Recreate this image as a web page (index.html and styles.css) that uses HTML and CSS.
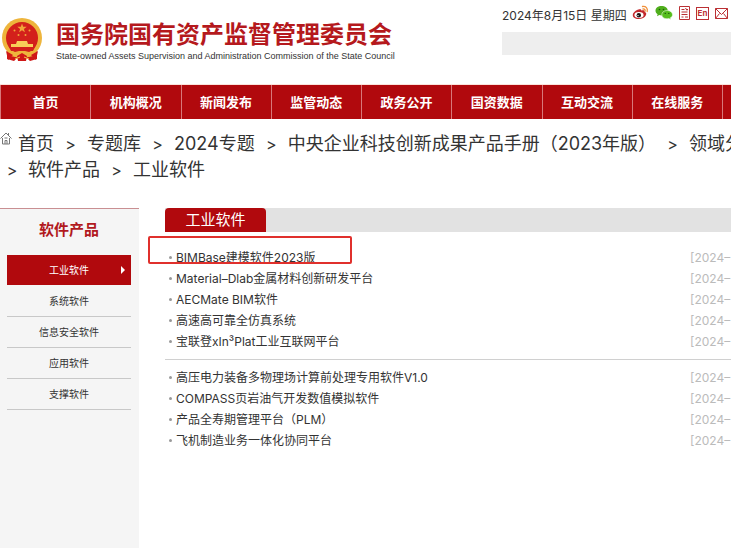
FILE: index.html
```html
<!DOCTYPE html>
<html lang="zh-CN">
<head>
    <meta charset="UTF-8">
    <meta name="viewport" content="width=device-width, initial-scale=1.0">
    <title>工业软件 - 国务院国有资产监督管理委员会</title>
    <link rel="stylesheet" href="styles.css">
</head>
<body>
    <header class="header">
        <svg class="emblem" viewBox="0 0 42 44" aria-hidden="true">
            <path d="M6 31 L6 41 L13 43 L16 40 L21 43 L26 40 L29 43 L36 41 L36 31 Z" fill="#cf1717"/>
            <circle cx="21" cy="20" r="20" fill="#eeb53c"/>
            <circle cx="21" cy="20" r="16" fill="#d3201b"/>
            <path d="M21 5.500l1.200 3.300h3.500l-2.800 2.100 1 3.400-2.900-2-2.900 2 1-3.400-2.800-2.100h3.500z" fill="#f0a53a"/>
            <g fill="#f0a53a">
                <circle cx="13.500" cy="12.500" r="1"/>
                <circle cx="28.500" cy="12.500" r="1"/>
                <circle cx="17.500" cy="17" r="1"/>
                <circle cx="24.500" cy="17" r="1"/>
            </g>
            <path d="M16 23h10l1 3h5v3H10v-3h5z" fill="#f8cf58"/>
            <path d="M8 29h26l-2 4H10z" fill="#d3201b"/>
            <path d="M6 32l8 2 4-1h6l4 1 8-2-3 6-6 1-6-3-6 3-6-1z" fill="#eeb53c"/>
            <path d="M5 33l7 4-5 5zM37 33l-7 4 5 5zM16 38l5-3 5 3-1 5h-8z" fill="#cf1717"/>
            <path d="M14 41l5-2M28 41l-5-2" stroke="#f6c242" fill="none"/>
        </svg>
        <div class="brand">
            <h1>国务院国有资产监督管理委员会</h1>
            <p>State-owned Assets Supervision and Administration Commission of the State Council</p>
        </div>
        <div class="tools">
            <div class="tools-row">
                <span class="date">2024年8月15日 星期四</span>
                <a href="#" aria-label="微博">
                    <svg width="17" height="16" viewBox="0 0 17 16">
                        <path d="M6.500 4.500c1.500-.7 3-.4 2.800 1.100 2-.8 3.900-.3 3.400 1.500 1.500.5 1.900 1.400 1.300 2.900-.9 2.500-4.100 4-7.500 4C3 14 .5 12.200.8 9.700 1.100 7.500 4 5.200 6.500 4.500z" fill="#c3272b"/>
                        <ellipse cx="7" cy="10" rx="4.600" ry="3" fill="#fff"/>
                        <circle cx="6.800" cy="10.200" r="2.200" fill="#1c1414"/>
                        <circle cx="6" cy="10.600" r=".7" fill="#fff"/>
                        <path d="M10.500 1.500c3.500-.5 5.500 2 4.700 5M11 4c1.600-.2 2.400.8 2.100 2.200" fill="none" stroke="#f0903a" stroke-width="1.300" stroke-linecap="round"/>
                    </svg>
                </a>
                <a href="#" aria-label="微信">
                    <svg width="18" height="16" viewBox="0 0 18 16">
                        <path d="M6.500 1C3 1 .5 3.100.5 5.700c0 1.500.8 2.700 2.100 3.600L2 11.300l2.300-1.200c.8.2 1.600.3 2.500.3 3.500 0 6-2.100 6-4.700S10 1 6.500 1z" fill="#4fae1c"/>
                        <path d="M12 5.500c-3 0-5.200 1.800-5.200 4.200s2.200 4.100 5.200 4.100c.7 0 1.300-.1 1.900-.3l2 1.100-.5-1.800c1.300-.7 2.100-1.800 2.100-3.100 0-2.400-2.500-4.200-5.500-4.200z" fill="#56bd1d" stroke="#fff" stroke-width=".5"/>
                        <g fill="#1d5c0c"><circle cx="4.500" cy="4.500" r=".8"/><circle cx="8.500" cy="4.500" r=".8"/><circle cx="10.300" cy="8.400" r=".7"/><circle cx="13.800" cy="8.400" r=".7"/></g>
                    </svg>
                </a>
                <a href="#" aria-label="移动版">
                    <svg width="11" height="14" viewBox="0 0 11 14" fill="none" stroke="#bb3034">
                        <path d="M.5.500h10v13H.5zM2.500 3.500h3M7 3.500h2M2.500 6h6M2.500 8.500h6M2.500 11h2M6 11h3"/>
                        <path d="M6.500 2l1.500 2.500"/>
                    </svg>
                </a>
                <a href="#" class="en" aria-label="English">En</a>
                <a href="#" aria-label="邮箱">
                    <svg width="13" height="11" viewBox="0 0 13 11" fill="none" stroke="#bb3034">
                        <path d="M.5.500h12v10H.5zM.5.500l6 6 6-6M.5 10.500l4-5M12.500 10.500l-4-5"/>
                    </svg>
                </a>
            </div>
            <input class="search" type="text" aria-label="搜索">
        </div>
    </header>

    <nav class="nav">
        <a href="#">首页</a>
        <a href="#">机构概况</a>
        <a href="#">新闻发布</a>
        <a href="#">监管动态</a>
        <a href="#">政务公开</a>
        <a href="#">国资数据</a>
        <a href="#">互动交流</a>
        <a href="#">在线服务</a>
        <span></span>
    </nav>

    <div class="crumbs">
        <div class="crumbs-row">
            <svg class="home" width="12" height="13" viewBox="0 0 12 13" fill="none" stroke="#777">
                <path d="M.5 6.500L6 1l5.500 5.500M2.500 6v6h7V6M8.500 1v2.500M5 12V8.500h2V12M4.500 6h3"/>
            </svg>
            <a href="#">首页</a><i>&gt;</i>
            <a href="#">专题库</a><i>&gt;</i>
            <a href="#">2024专题</a><i>&gt;</i>
            <a href="#">中央企业科技创新成果产品手册（2023年版）</a><i>&gt;</i>
            <a href="#">领域分</a>
        </div>
        <div class="crumbs-row second">
            <i>&gt;</i><a href="#">软件产品</a><i>&gt;</i>
            <a href="#">工业软件</a>
        </div>
    </div>

    <div class="content">
        <aside class="side">
            <h2>软件产品</h2>
            <a href="#" class="active">工业软件</a>
            <a href="#">系统软件</a>
            <a href="#">信息安全软件</a>
            <a href="#">应用软件</a>
            <a href="#">支撑软件</a>
        </aside>
        <main class="main">
            <div class="tab-bar"><h2>工业软件</h2></div>
            <ul class="list">
                <li class="marked"><a href="#">BIMBase建模软件2023版</a><span>[2024–</span></li>
                <li><a href="#">Material–Dlab金属材料创新研发平台</a><span>[2024–</span></li>
                <li><a href="#">AECMate BIM软件</a><span>[2024–</span></li>
                <li><a href="#">高速高可靠全仿真系统</a><span>[2024–</span></li>
                <li><a href="#">宝联登xIn³Plat工业互联网平台</a><span>[2024–</span></li>
            </ul>
            <ul class="list">
                <li><a href="#">高压电力装备多物理场计算前处理专用软件V1.0</a><span>[2024–</span></li>
                <li><a href="#">COMPASS页岩油气开发数值模拟软件</a><span>[2024–</span></li>
                <li><a href="#">产品全寿期管理平台（PLM）</a><span>[2024–</span></li>
                <li><a href="#">飞机制造业务一体化协同平台</a><span>[2024–</span></li>
            </ul>
        </main>
    </div>
</body>
</html>
```
FILE: styles.css
```css
*, *::before, *::after {
    box-sizing: border-box;
}

body {
    margin: 0;
    min-height: 100vh;
    display: flex;
    flex-direction: column;
    overflow-x: hidden;
    background-color: #fff;
    color: #333;
    font-family: Inter, "Noto Sans CJK SC", sans-serif;
    font-size: 12px;
}

h1, h2, p, ul {
    margin: 0;
    padding: 0;
}

a {
    color: inherit;
    text-decoration: none;
}

.header {
    display: flex;
    height: 85px;
    border-bottom: 1px solid #fbe3dc;
}

.emblem {
    width: 42px;
    height: 44px;
    margin: 18px 13px 0 1px;
}

.brand {
    flex: 1;
    padding-top: 20px;
    white-space: nowrap;
}

.brand h1 {
    color: #b5191d;
    font-size: 24px;
    line-height: 30px;
}

.brand p {
    color: #333;
    font-family: "Liberation Sans", Arial, sans-serif;
    font-size: 9px;
    line-height: 12px;
}

.tools {
    width: 229px;
    padding-top: 4px;
}

.tools-row {
    display: flex;
    align-items: center;
    height: 20px;
    gap: 6px;
    padding-right: 3px;
}

.tools-row a {
    display: flex;
    flex: none;
}

.tools-row a svg {
    margin-bottom: 2px;
}

.date {
    flex: 1;
    min-width: 0;
    white-space: nowrap;
}

.tools-row .en {
    width: 13px;
    height: 13px;
    margin-bottom: 2px;
    align-items: center;
    justify-content: center;
    border: 1px solid #bb3034;
    color: #bb3034;
    font-size: 8px;
    font-weight: bold;
}

.search {
    display: block;
    width: 100%;
    height: 23px;
    margin-top: 8px;
    border: none;
    background-color: #eee;
}

.nav {
    display: grid;
    grid-template-columns: repeat(8, 1fr) 9px;
    height: 34px;
    background-color: #b1090d;
    color: #fff;
    font-size: 13px;
    font-weight: bold;
    line-height: 34px;
    text-align: center;
}

.nav > * {
    border-left: 1px solid #d8787a;
}

.crumbs {
    padding-top: 12px;
    font-size: 18px;
    line-height: 26px;
    white-space: nowrap;
}

.crumbs-row {
    display: flex;
}

.crumbs-row > * {
    flex: none;
}

.crumbs-row i {
    width: 33px;
    font-size: 16px;
    font-style: normal;
    text-align: center;
}

.second i:first-child {
    width: 28px;
    padding-right: 4px;
}

.home {
    margin: 1px 6px 0 0;
}

.content {
    flex: 1;
    display: flex;
    margin-top: 25px;
}

.side {
    width: 139px;
    padding: 10px 8px 0 7px;
    border-top: 1px solid #c98f92;
    background-color: #f5f5f5;
    text-align: center;
}

.side h2 {
    margin-bottom: 14px;
    color: #b1191d;
    font-size: 15px;
    line-height: 22px;
}

.side a {
    display: block;
    height: 31px;
    border-bottom: 1px solid #c8c8c8;
    font-size: 10px;
    line-height: 31px;
}

.side .active {
    position: relative;
    border-bottom-color: #f5f5f5;
    background-color: #b1090d;
    background-clip: padding-box;
    color: #fff;
}

.side .active::after {
    content: "";
    position: absolute;
    right: 6px;
    top: 11px;
    border: 4px solid transparent;
    border-left-color: #fff;
    border-right: none;
}

.main {
    flex: 1;
    min-width: 0;
    padding-left: 26px;
}

.tab-bar {
    height: 24px;
    margin-bottom: 8px;
    background-color: #e2e2e2;
}

.tab-bar h2 {
    width: 101px;
    border-radius: 4px 4px 0 0;
    background-color: #b1090d;
    color: #fff;
    font-size: 15px;
    font-weight: normal;
    line-height: 24px;
    text-align: center;
}

.list {
    padding: 7px 0;
    list-style: none;
}

.list + .list {
    border-top: 1px solid #d0d0d0;
}

.list li {
    display: flex;
    align-items: center;
    height: 21px;
    padding-left: 4px;
    line-height: 21px;
    white-space: nowrap;
}

.list li::before {
    content: "";
    width: 3px;
    height: 3px;
    margin-right: 4px;
    border-radius: 50%;
    background-color: #999;
}

.list a {
    flex: 1;
}

.list span {
    width: 41px;
    color: #bbb;
}

.marked {
    position: relative;
}

/* red frame over the first entry */
.marked::after {
    content: "";
    position: absolute;
    left: -17px;
    top: -11px;
    width: 204px;
    height: 28px;
    border: 2px solid #e0302c;
    border-radius: 2px;
}
```
